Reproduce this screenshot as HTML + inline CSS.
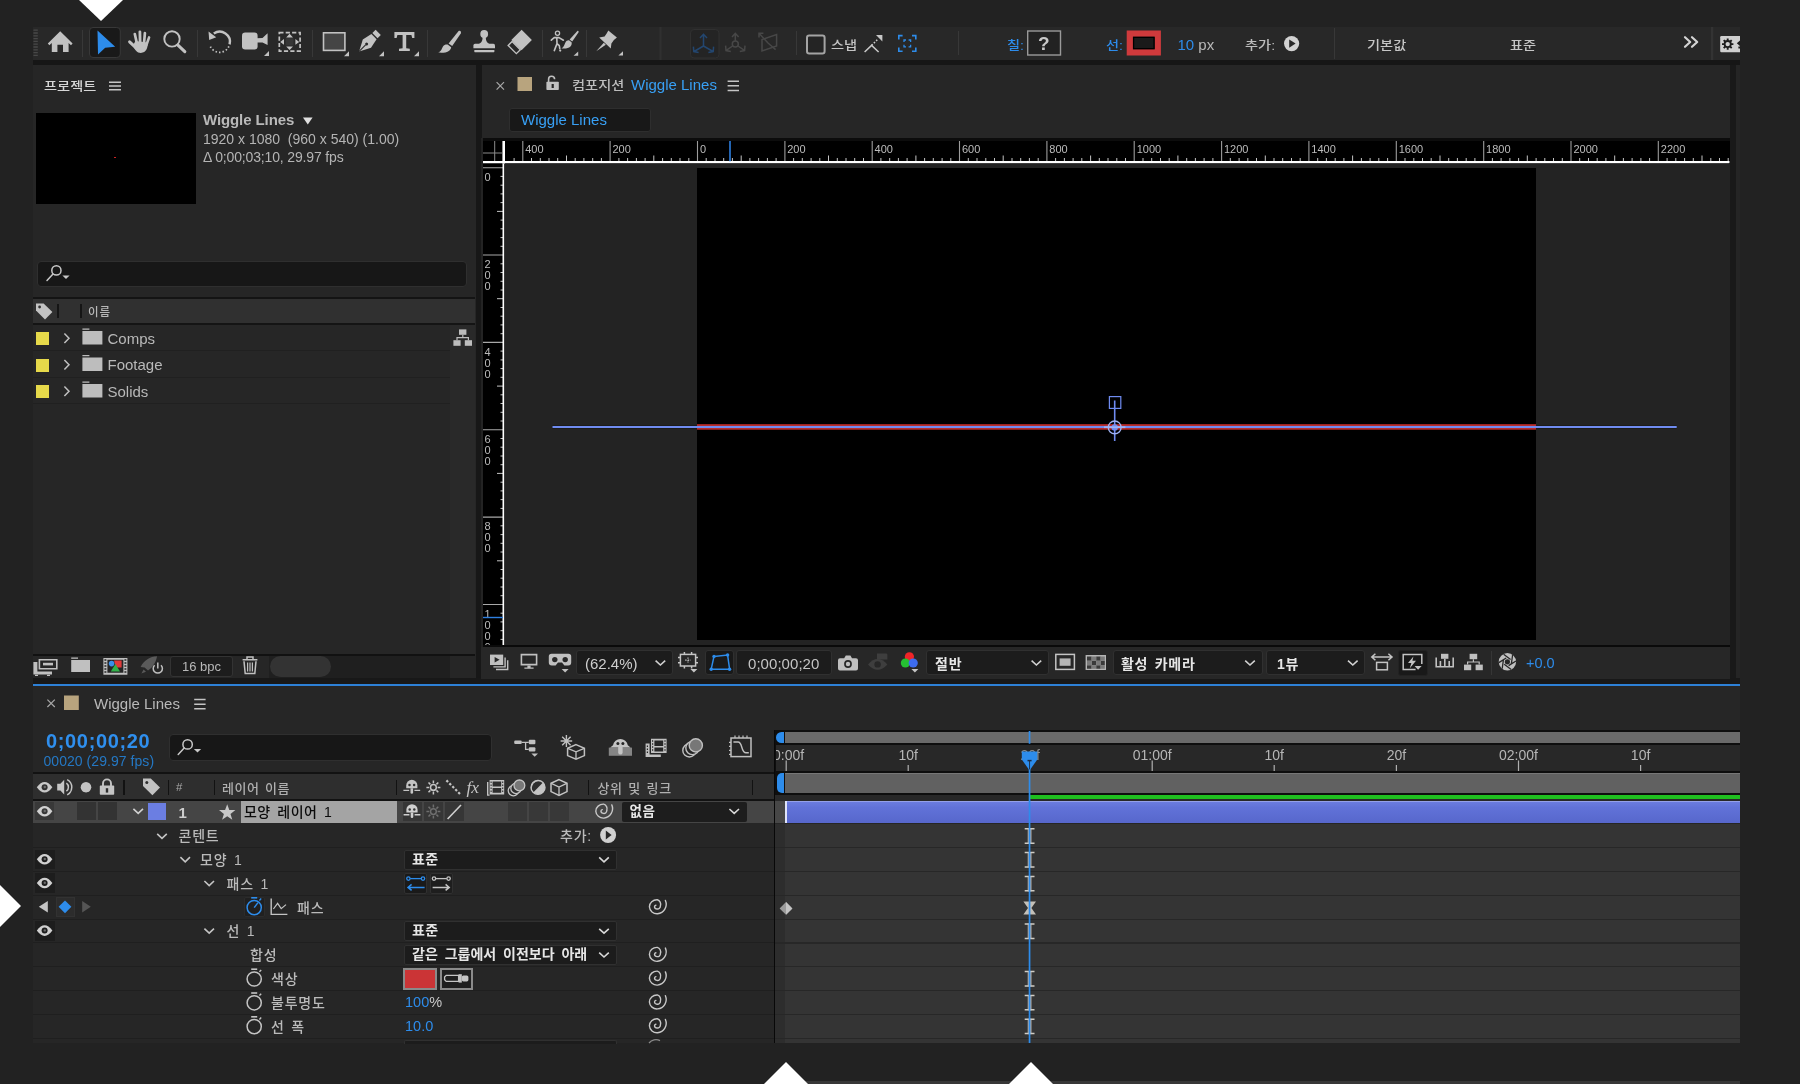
<!DOCTYPE html>
<html lang="ko">
<head>
<meta charset="utf-8">
<title>Wiggle Lines</title>
<style>
*{box-sizing:border-box;margin:0;padding:0}
html,body{width:1800px;height:1084px;overflow:hidden;background:#222222}
body{position:relative;font-family:"Liberation Sans","Noto Sans CJK KR",sans-serif;color:#bdbdbd;font-size:14px;line-height:1;font-weight:500}
#wrap{position:absolute;left:0;top:0;width:1800px;height:1084px;will-change:transform}
.a{position:absolute}
.t{position:absolute;white-space:nowrap;line-height:1;z-index:2}
.k{font-size:12.2px;transform:scaleX(1.165);transform-origin:0 0}
.bl{color:#2d8ceb}
.w{color:#e6e6e6;font-weight:bold}
.dd{position:absolute;background:#1c1c1c;border:1px solid #303030;border-radius:3px}
svg{position:absolute;left:0;top:0;overflow:visible}
#ico{width:1800px;height:1084px;pointer-events:none;z-index:1}
.row{position:absolute;left:33px;width:741px;height:1px;background:#1f1f1f}
.trow{position:absolute;left:775.4px;width:964.6px;height:1.4px;background:#272727}
</style>
</head>
<body>
<div id="wrap">
<!-- ===== base panels ===== -->
<div class="a" style="left:33px;top:27px;width:1707px;height:1016px;background:#262626"></div>
<!-- toolbar -->
<div class="a" style="left:33px;top:27px;width:1707px;height:33px;background:#282828"></div>
<div class="a" style="left:33px;top:60px;width:1707px;height:5px;background:#161616"></div>
<!-- divider project / comp -->
<div class="a" style="left:476px;top:65px;width:5.5px;height:620px;background:#171717"></div>
<!-- comp right bar -->
<div class="a" style="left:1730px;top:65px;width:6px;height:620px;background:#191919"></div>
<div class="a" style="left:1736px;top:65px;width:4px;height:614px;background:#252525"></div>
<!-- strip between upper panels and timeline -->
<div class="a" style="left:33px;top:678px;width:1707px;height:6px;background:#181818"></div>
<div class="a" style="left:33px;top:684px;width:1707px;height:2px;background:#2d80d6"></div>
<div class="a" style="left:785px;top:1080.7px;width:955px;height:3.3px;background:#373737"></div>
<!-- white triangles (pointer marks) -->
<div class="a" style="left:79px;top:0;width:0;height:0;border-left:22px solid transparent;border-right:22px solid transparent;border-top:21.5px solid #fff"></div>
<div class="a" style="left:0;top:885px;width:0;height:0;border-top:21.5px solid transparent;border-bottom:21.5px solid transparent;border-left:21.5px solid #fff"></div>
<div class="a" style="left:763.5px;top:1062px;width:0;height:0;border-left:22px solid transparent;border-right:22px solid transparent;border-bottom:22px solid #fff"></div>
<div class="a" style="left:1009px;top:1062px;width:0;height:0;border-left:22px solid transparent;border-right:22px solid transparent;border-bottom:22px solid #fff"></div>
<!-- ===== project panel ===== -->
<div class="t k" style="left:43.5px;top:80.6px;color:#d6d6d6">프로젝트</div>
<div class="a" style="left:36px;top:113px;width:160px;height:91px;background:#000"></div>
<div class="a" style="left:114px;top:156.5px;width:2px;height:1px;background:#c22"></div>
<div class="t" style="left:203px;top:112px;font-size:15px;font-weight:bold;color:#b9b9b9;letter-spacing:-0.1px">Wiggle Lines</div>
<div class="t" style="left:203px;top:132px;font-size:14px;color:#b4b4b4">1920 x 1080&nbsp; (960 x 540) (1.00)</div>
<div class="t" style="left:203px;top:150px;font-size:14px;color:#b4b4b4;letter-spacing:-0.15px">&Delta; 0;00;03;10, 29.97 fps</div>
<!-- search -->
<div class="a" style="left:37px;top:261px;width:430px;height:26px;background:#171717;border:1px solid #2f2f2f;border-radius:4px"></div>
<!-- column header -->
<div class="a" style="left:33px;top:297px;width:442px;height:28px;background:#141414"></div>
<div class="a" style="left:33px;top:299px;width:442px;height:24px;background:#303030"></div>
<div class="a" style="left:57px;top:304px;width:2px;height:14px;background:#151515"></div>
<div class="a" style="left:79.5px;top:304px;width:2px;height:14px;background:#151515"></div>
<div class="t" style="left:88px;top:306.5px;font-size:11.5px;color:#b8b8b8;letter-spacing:0.8px">이름</div>
<!-- rows -->
<div class="a" style="left:450px;top:325px;width:25px;height:329px;background:#292929"></div>
<div class="a" style="left:33px;top:350px;width:417px;height:1px;background:#202020"></div>
<div class="a" style="left:33px;top:377px;width:417px;height:1px;background:#202020"></div>
<div class="a" style="left:33px;top:403px;width:417px;height:1px;background:#202020"></div>
<div class="a" style="left:36px;top:332px;width:13px;height:13px;background:#e6d94a"></div>
<div class="a" style="left:36px;top:358.5px;width:13px;height:13px;background:#e6d94a"></div>
<div class="a" style="left:36px;top:385px;width:13px;height:13px;background:#e6d94a"></div>
<div class="t" style="left:107.5px;top:330.5px;font-size:15px;color:#b9b9b9">Comps</div>
<div class="t" style="left:107.5px;top:357px;font-size:15px;color:#b9b9b9">Footage</div>
<div class="t" style="left:107.5px;top:383.5px;font-size:15px;color:#b9b9b9">Solids</div>
<!-- footer -->
<div class="a" style="left:33px;top:654px;width:442px;height:1.5px;background:#111"></div>
<div class="a" style="left:269px;top:655.5px;width:181px;height:22px;background:#1f1f1f"></div>
<div class="a" style="left:270px;top:655.5px;width:61px;height:21px;background:#333;border-radius:11px"></div>
<div class="a" style="left:170px;top:656px;width:63px;height:20.5px;background:#1d1d1d;border:1px solid #333;border-radius:3px"></div>
<div class="t" style="left:182px;top:660px;font-size:13px;color:#b8b8b8">16 bpc</div>
<!-- ===== toolbar text ===== -->
<div class="t" style="left:831px;top:39.5px;font-size:12.2px;transform:scaleX(1.165);transform-origin:0 0;color:#c4c4c4">스냅</div>
<div class="t bl" style="left:1006.5px;top:39.5px;font-size:12.2px;transform:scaleX(1.165);transform-origin:0 0">칠:</div>
<div class="t" style="left:1038px;top:33.5px;font-size:19px;font-weight:bold;color:#c8c8c8">?</div>
<div class="t bl" style="left:1106px;top:39.5px;font-size:12.2px;transform:scaleX(1.165);transform-origin:0 0">선:</div>
<div class="t" style="left:1177.5px;top:36.5px;font-size:15px;color:#b8b8b8"><span class="bl">10</span> px</div>
<div class="t" style="left:1245px;top:39.5px;font-size:12.2px;transform:scaleX(1.165);transform-origin:0 0;color:#bdbdbd">추가:</div>
<div class="t" style="left:1366.5px;top:39.5px;font-size:12.2px;transform:scaleX(1.165);transform-origin:0 0;color:#c6c6c6">기본값</div>
<div class="t" style="left:1510px;top:39.5px;font-size:12.2px;transform:scaleX(1.165);transform-origin:0 0;color:#c6c6c6">표준</div>
<!-- ===== composition panel ===== -->
<div class="t k" style="left:572.3px;top:80.3px;color:#bdbdbd">컴포지션</div>
<div class="t" style="left:631px;top:77px;font-size:15px;color:#38a0f5">Wiggle Lines</div>
<div class="a" style="left:509px;top:108px;width:142px;height:24px;background:#181818;border:1px solid #2e2e2e;border-radius:3px"></div>
<div class="t" style="left:521px;top:112px;font-size:15px;color:#38a0f5">Wiggle Lines</div>
<!-- viewer -->
<div class="a" style="left:481px;top:138px;width:1249px;height:509px;background:#232323"></div>
<div class="a" style="left:483px;top:138px;width:1247px;height:2.5px;background:#0c0c0c"></div>
<div class="a" style="left:483px;top:140.5px;width:1246.5px;height:23px;background:#000"></div>
<div class="a" style="left:483px;top:163px;width:20px;height:482.5px;background:#000"></div>
<div class="a" style="left:483px;top:645px;width:1246.5px;height:2px;background:#0a0a0a"></div>
<!-- canvas -->
<div class="a" style="left:697px;top:168px;width:839px;height:471.5px;background:#000"></div>
<!-- footer -->
<div class="a" style="left:481px;top:647px;width:1249px;height:32px;background:#272727"></div>
<div class="dd" style="left:576px;top:650px;width:96.5px;height:25px"></div>
<div class="t" style="left:585px;top:655.5px;font-size:15px;color:#cfcfcf">(62.4%)</div>
<div class="dd" style="left:705px;top:650px;width:29px;height:25px;background:#191919"></div>
<div class="dd" style="left:735.5px;top:650px;width:96.5px;height:25px"></div>
<div class="t" style="left:748px;top:656px;font-size:15px;color:#c4c4c4;letter-spacing:0.05px">0;00;00;20</div>
<div class="dd" style="left:926px;top:650px;width:123px;height:25px"></div>
<div class="t w" style="left:935px;top:656.5px;font-size:14px;letter-spacing:0.8px">절반</div>
<div class="dd" style="left:1112.5px;top:650px;width:150px;height:25px"></div>
<div class="t w" style="left:1121px;top:656.5px;font-size:14px;word-spacing:2px;letter-spacing:0.7px">활성 카메라</div>
<div class="dd" style="left:1266px;top:650px;width:99px;height:25px"></div>
<div class="t w" style="left:1277px;top:656.5px;font-size:14px;letter-spacing:0.6px">1뷰</div>
<div class="dd" style="left:1397.5px;top:650px;width:30px;height:25.5px;background:#191919;border-color:#222"></div>
<div class="a" style="left:1491px;top:651px;width:1px;height:24px;background:#363636"></div>
<div class="t bl" style="left:1526px;top:656px;font-size:14.5px">+0.0</div>
<!-- ===== timeline panel ===== -->
<div class="t" style="left:94px;top:695.5px;font-size:15px;color:#b9b9b9">Wiggle Lines</div>
<div class="t bl" style="left:46px;top:730.5px;font-size:20px;font-weight:bold;letter-spacing:0.65px;color:#2f8fee">0;00;00;20</div>
<div class="t" style="left:43.5px;top:754px;font-size:14px;color:#2478c4;letter-spacing:0.05px">00020 (29.97 fps)</div>
<div class="a" style="left:168.5px;top:734px;width:323.5px;height:26.5px;background:#171717;border:1px solid #2f2f2f;border-radius:4px"></div>
<!-- column header -->
<div class="a" style="left:33px;top:772px;width:741.5px;height:29px;background:#121212"></div>
<div class="a" style="left:33px;top:774px;width:741.5px;height:25px;background:#2e2e2e"></div>
<div class="a" style="left:123px;top:780px;width:1.6px;height:14.5px;background:#121212"></div>
<div class="a" style="left:167.5px;top:780px;width:1.6px;height:14.5px;background:#121212"></div>
<div class="a" style="left:213.5px;top:780px;width:1.6px;height:14.5px;background:#121212"></div>
<div class="a" style="left:395.5px;top:780px;width:1.6px;height:14.5px;background:#121212"></div>
<div class="a" style="left:587.5px;top:780px;width:1.6px;height:14.5px;background:#121212"></div>
<div class="a" style="left:751.5px;top:780px;width:1.6px;height:14.5px;background:#121212"></div>
<div class="t" style="left:176px;top:781.5px;font-size:11.5px;color:#a8a8a8">#</div>
<div class="t" style="left:222px;top:781.5px;font-size:13px;color:#b0b0b0;word-spacing:1px;letter-spacing:0.6px">레이어 이름</div>
<div class="t" style="left:597.5px;top:781.5px;font-size:13px;color:#b0b0b0;word-spacing:1.5px;letter-spacing:0.6px">상위 및 링크</div>
<!-- layer row -->
<div class="a" style="left:33px;top:801px;width:741.5px;height:22px;background:#454545"></div>
<div class="a" style="left:35px;top:802px;width:18.5px;height:18px;background:#383838"></div>
<div class="a" style="left:77px;top:802px;width:18.5px;height:18px;background:#333"></div>
<div class="a" style="left:98px;top:802px;width:18.5px;height:18px;background:#333"></div>
<div class="a" style="left:148px;top:803px;width:17.5px;height:17px;background:#6b7ee2"></div>
<div class="t" style="left:178.5px;top:804.5px;font-size:15px;font-weight:bold;color:#cdcdcd">1</div>
<div class="a" style="left:240.5px;top:801px;width:156px;height:22px;background:#a4a4a4"></div>
<div class="t" style="left:244px;top:805px;font-size:14px;color:#0a0a0a;word-spacing:2.5px;letter-spacing:0.4px">모양 레이어 1</div>
<div class="a" style="left:403px;top:802px;width:18.5px;height:19px;background:#363636"></div>
<div class="a" style="left:424px;top:802px;width:18.5px;height:19px;background:#363636"></div>
<div class="a" style="left:445px;top:802px;width:18.5px;height:19px;background:#363636"></div>
<div class="a" style="left:508px;top:802px;width:18.5px;height:19px;background:#383838"></div>
<div class="a" style="left:529px;top:802px;width:18.5px;height:19px;background:#383838"></div>
<div class="a" style="left:550px;top:802px;width:18.5px;height:19px;background:#383838"></div>
<div class="a" style="left:621.5px;top:801.5px;width:125.5px;height:20px;background:#1d1d1d;border-radius:2px"></div>
<div class="t w" style="left:629.5px;top:804.5px;font-size:13.5px;letter-spacing:0.5px">없음</div>
<!-- property rows (separators) -->
<div class="row" style="top:847px"></div>
<div class="row" style="top:871px"></div>
<div class="row" style="top:894.7px"></div>
<div class="row" style="top:918.5px"></div>
<div class="row" style="top:942.3px"></div>
<div class="row" style="top:966px"></div>
<div class="row" style="top:990px"></div>
<div class="row" style="top:1013.7px"></div>
<div class="row" style="top:1037.5px"></div>
<!-- eye cells -->
<div class="a" style="left:35px;top:849.5px;width:19.5px;height:19.5px;background:#1d1d1d"></div>
<div class="a" style="left:35px;top:873.3px;width:19.5px;height:19.5px;background:#1d1d1d"></div>
<div class="a" style="left:35px;top:921px;width:19.5px;height:19.5px;background:#1d1d1d"></div>
<div class="a" style="left:56px;top:897px;width:19px;height:19.5px;background:#2c2c2c;border:1px solid #323232"></div>
<div class="a" style="left:243.5px;top:896.5px;width:21.5px;height:20.5px;background:#202020;border:1px solid #2c2c2c;border-radius:2px"></div>
<!-- labels -->
<div class="t" style="left:178.5px;top:829.0px;font-size:14px;color:#bababa;letter-spacing:0.8px">콘텐트</div>
<div class="t" style="left:560px;top:828.5px;font-size:14px;color:#bababa;letter-spacing:0.8px">추가:</div>
<div class="t" style="left:200px;top:853.0px;font-size:14px;color:#bababa;letter-spacing:0.8px;word-spacing:2px">모양 1</div>
<div class="t" style="left:226.5px;top:876.8px;font-size:14px;color:#bababa;letter-spacing:0.8px;word-spacing:2px">패스 1</div>
<div class="t" style="left:297px;top:900.6px;font-size:14px;color:#bababa;letter-spacing:0.8px">패스</div>
<div class="t" style="left:226.5px;top:924.4px;font-size:14px;color:#bababa;letter-spacing:0.8px;word-spacing:2px">선 1</div>
<div class="t" style="left:250px;top:948.2px;font-size:14px;color:#bababa;letter-spacing:0.8px">합성</div>
<div class="t" style="left:271px;top:972.0px;font-size:14px;color:#bababa;letter-spacing:0.8px">색상</div>
<div class="t" style="left:271px;top:995.8px;font-size:14px;color:#bababa;letter-spacing:0.8px">불투명도</div>
<div class="t" style="left:271px;top:1019.6px;font-size:14px;color:#bababa;letter-spacing:0.8px;word-spacing:2px">선 폭</div>
<!-- dropdowns -->
<div class="dd" style="left:403.5px;top:849.5px;width:213px;height:20px;border-radius:2px"></div>
<div class="t w" style="left:412px;top:851.7px;font-size:14px;letter-spacing:0.3px">표준</div>
<div class="dd" style="left:403.5px;top:921px;width:213px;height:20px;border-radius:2px"></div>
<div class="t w" style="left:412px;top:923.2px;font-size:14px;letter-spacing:0.3px">표준</div>
<div class="dd" style="left:403.5px;top:944.8px;width:213px;height:20px;border-radius:2px"></div>
<div class="t w" style="left:412px;top:947px;font-size:14px;word-spacing:3px">같은 그룹에서 이전보다 아래</div>
<div class="dd" style="left:403.5px;top:1040px;width:213px;height:4px;border-radius:2px 2px 0 0;border-bottom:0"></div>
<div class="dd" style="left:403.5px;top:873px;width:23.5px;height:20.5px;background:#1a1a1a;border-color:#303030;border-radius:2px"></div>
<div class="dd" style="left:429.5px;top:873px;width:23.5px;height:20.5px;background:#1e1e1e;border-color:#303030;border-radius:2px"></div>
<!-- colour swatch / eyedropper -->
<div class="a" style="left:403px;top:967.5px;width:33.5px;height:22px;background:#cb3436;border:2px solid #8a8a8a"></div>
<div class="a" style="left:439.5px;top:967.5px;width:33.5px;height:22px;background:#1f1f1f;border:2px solid #8a8a8a"></div>
<div class="t" style="left:405px;top:995.3px;font-size:14.5px;color:#c8c8c8"><span class="bl">100</span>%</div>
<div class="t bl" style="left:405px;top:1019px;font-size:14.5px">10.0</div>
<!-- ===== time graph ===== -->
<div class="a" style="left:773.6px;top:730px;width:966.4px;height:71px;background:#0e0e0e"></div>
<div class="a" style="left:773.6px;top:730px;width:1.8px;height:313px;background:#080808"></div>
<div class="a" style="left:785px;top:732px;width:955px;height:10.7px;background:#6a6a6a"></div>
<div class="a" style="left:775.5px;top:732px;width:8.5px;height:10.7px;background:#2d8ceb;border-radius:6px 0 0 6px"></div>
<div class="a" style="left:776px;top:744.5px;width:964px;height:26.5px;background:#282828"></div>
<div class="a" style="left:785px;top:773.3px;width:955px;height:20px;background:#616161"></div>
<div class="a wa-hi" style="left:785px;top:773.3px;width:955px;height:1px;background:#777"></div>
<div class="a" style="left:776.5px;top:773.3px;width:7.5px;height:20px;background:#2d8ceb;border-radius:5px 0 0 5px"></div>
<div class="a" style="left:775.4px;top:795px;width:964.6px;height:6px;background:#282828"></div>
<div class="a" style="left:1030px;top:795.3px;width:710px;height:3.7px;background:#1fbf1f"></div>
<!-- layer bar -->
<div class="a" style="left:775.4px;top:801px;width:9.8px;height:22px;background:#474747"></div>
<div class="a" style="left:785.2px;top:801px;width:954.8px;height:21.7px;background:linear-gradient(#a9b3ee 0,#6a7bde 1.5px,#6172d8 30%,#5767cc 100%)"></div>
<div class="a" style="left:785.2px;top:801px;width:1.4px;height:21.7px;background:#dfe3fa"></div>
<!-- rows -->
<div class="a" style="left:776px;top:822.7px;width:964px;height:220.3px;background:#343434"></div>
<div class="a" style="left:775.4px;top:822.7px;width:9.8px;height:220.3px;background:#2d2d2d"></div>
<div class="trow" style="top:822.7px;background:#262626"></div>
<div class="trow" style="top:847px"></div>
<div class="trow" style="top:871px"></div>
<div class="trow" style="top:894.7px"></div>
<div class="trow" style="top:918.5px"></div>
<div class="trow" style="top:942.3px"></div>
<div class="trow" style="top:966px"></div>
<div class="trow" style="top:990px"></div>
<div class="trow" style="top:1013.7px"></div>
<div class="trow" style="top:1037.5px"></div>
<!-- time labels -->
<div class="a" style="left:776px;top:744.5px;width:40px;height:26px;overflow:hidden"><div class="t" style="left:-10.8px;top:3px;font-size:14px;color:#b6b6b6">00:00f</div></div>
<div class="t" style="left:908.2px;top:747.5px;font-size:14px;color:#b6b6b6;transform:translateX(-50%)">10f</div>
<div class="t" style="left:1030.2px;top:747.5px;font-size:14px;color:#8e8e8e;z-index:0;transform:translateX(-50%)">20f</div>
<div class="t" style="left:1152.2px;top:747.5px;font-size:14px;color:#b6b6b6;transform:translateX(-50%)">01:00f</div>
<div class="t" style="left:1274.2px;top:747.5px;font-size:14px;color:#b6b6b6;transform:translateX(-50%)">10f</div>
<div class="t" style="left:1396.4px;top:747.5px;font-size:14px;color:#b6b6b6;transform:translateX(-50%)">20f</div>
<div class="t" style="left:1518.5px;top:747.5px;font-size:14px;color:#b6b6b6;transform:translateX(-50%)">02:00f</div>
<div class="t" style="left:1640.6px;top:747.5px;font-size:14px;color:#b6b6b6;transform:translateX(-50%)">10f</div>
<svg id="ico" viewBox="0 0 1800 1084">
<!-- ===== toolbar ===== -->
<g fill="#c2c2c2" stroke="none">
<!-- grip -->
<path d="M33.4 30.2h4.4M33.4 33h4.4M33.4 35.8h4.4M33.4 38.6h4.4M33.4 41.4h4.4M33.4 44.2h4.4M33.4 47h4.4M33.4 49.8h4.4M33.4 52.6h4.4M33.4 55.4h4.4" stroke="#484848" stroke-width="1.3" fill="none"/>
<!-- separators -->
<path d="M82.5 30v27M197.5 30v27M312.5 30v27M427.5 30v27M542.5 30v27M586.5 30v27M796.5 31v24M958.5 31v24M1334.5 28v31" stroke="#383838" stroke-width="1" fill="none"/>
<path d="M1712.1 27v33" stroke="#333" stroke-width="2.2" fill="none"/>
<path d="M660.5 27v33" stroke="#303030" stroke-width="2" fill="none"/>
<!-- home -->
<path d="M60.2 31.2L72.6 43.6L71 45.2L68.6 43V52H63V44.7H57.4V52H51.8V43L49.4 45.2L47.8 43.6Z"/>
<!-- selection tool -->
<rect x="89.5" y="27.5" width="30.8" height="30" rx="3.5" fill="#191919" stroke="#383838" stroke-width="1"/>
<path d="M97.5 30.4L115.2 46.8L105.2 47.8L98 54.6Z" fill="#2d8ceb"/>
<!-- hand -->
<g stroke="#c2c2c2" stroke-linecap="round" fill="none">
<path d="M134.8 34L136.8 43" stroke-width="2.7"/>
<path d="M139.9 31.8L140.1 42" stroke-width="2.8"/>
<path d="M144.9 33.2L144.1 42.5" stroke-width="2.7"/>
<path d="M149.1 37.4L146.4 45" stroke-width="2.6"/>
<path d="M129.6 41.8L135.8 47.6" stroke-width="3"/>
</g>
<path d="M135.4 41L147.6 42.6C148 48.4 146 52.9 140.8 52.9C137 52.9 134.6 49.6 133 45.4Z"/>
<!-- zoom -->
<circle cx="172" cy="38.9" r="7.7" fill="none" stroke="#c2c2c2" stroke-width="1.9"/>
<path d="M177.9 45.1L184.8 51.6" stroke="#c2c2c2" stroke-width="3.1" stroke-linecap="round" fill="none"/>
<!-- rotate -->
<path d="M213.8 33.6A10.2 10.2 0 0 1 229.6 44.4" fill="none" stroke="#c2c2c2" stroke-width="2.4"/>
<path d="M228.9 46.3A10.2 10.2 0 0 1 210 45.6" fill="none" stroke="#c2c2c2" stroke-width="1.7" stroke-dasharray="1.5 2.05"/>
<path d="M208.5 31.6L216.2 37.2L209.2 39.9Z"/>
<!-- camera -->
<rect x="242" y="32.6" width="15.6" height="16.8" rx="3.2"/>
<path d="M256.5 38.3L262.5 38L267.6 33.2V45L262.5 42.4L256.5 42.6Z"/>
<path d="M269 51v5h-5z"/>
<!-- pan behind -->
<rect x="279.3" y="32.7" width="20.8" height="18.4" fill="none" stroke="#c2c2c2" stroke-width="1.7" stroke-dasharray="4.2 2.2"/>
<rect x="285.6" y="38.2" width="8" height="7.4" fill="#363636"/>
<path d="M289.6 33.8L293 37.4H286.2ZM289.6 50L293 46.4H286.2ZM280.2 41.9L284 39V44.8ZM299.2 41.9L295.4 39V44.8Z"/>
<!-- rect tool -->
<rect x="323.5" y="32.8" width="21.4" height="17.6" fill="#454545" stroke="#c2c2c2" stroke-width="1.6"/>
<path d="M349 51.2v5h-5z"/>
<!-- pen -->
<g transform="translate(368.6 42) rotate(45)">
<rect x="-3.7" y="-13.6" width="7.4" height="4.6"/>
<path d="M-3.7 -7.6H3.7L5.8 2.4L0 13.4L-5.8 2.4Z"/>
<path d="M0 13.4V4.2" stroke="#282828" stroke-width="1" fill="none"/>
<circle cx="0" cy="2.8" r="1.5" fill="#282828"/>
</g>
<path d="M384 51.2v5h-5z"/>
<!-- type -->
<path d="M394.4 32H414.4V38H412.2L411.4 35H406.2V48.2L409.8 48.8V51H399V48.8L402.6 48.2V35H397.4L396.6 38H394.4Z"/>
<path d="M419 51.2v5h-5z"/>
<!-- brush -->
<path d="M458.4 31.2C460 30.2 461.6 31.6 460.8 33.4L452.2 46L448.6 43.6Z"/>
<path d="M447.6 44.6L451.2 47.2C450.6 51 446.6 53.4 438.2 52.6C441.6 51 441.8 48.2 443 46.4C444.2 44.8 446 44.2 447.6 44.6Z"/>
<!-- stamp -->
<circle cx="484.2" cy="33.9" r="3.9"/>
<path d="M482.5 36.6C482.8 40 482 42.6 478.6 44.2H489.8C486.4 42.6 485.6 40 485.9 36.6Z"/>
<path d="M475 43.8H493.4Q495 43.8 495 45.4V48.2H473.4V45.4Q473.4 43.8 475 43.8Z"/>
<rect x="474.3" y="49.9" width="20.1" height="2.3" rx="0.6"/>
<!-- eraser -->
<g transform="translate(521.6 39.9) rotate(45)">
<rect x="-7.25" y="-7.25" width="14.5" height="14.5"/>
<rect x="-5.6" y="7.8" width="11.6" height="5.6" fill="none" stroke="#c2c2c2" stroke-width="1.4"/>
</g>
<!-- roto brush -->
<circle cx="557.5" cy="33.3" r="2.1" fill="none" stroke="#c2c2c2" stroke-width="1.3"/>
<path d="M551.3 40.2L554.2 37.6H559L563.4 40.2M556.8 37.8L557 43.6L554.3 50.6M557 43.6L559.3 45.6L559.8 48.6" fill="none" stroke="#c2c2c2" stroke-width="1.6" stroke-linecap="round" stroke-linejoin="round"/>
<circle cx="560.2" cy="50.6" r="1.1"/>
<path d="M577.6 30.8C578.6 30.6 578.8 31.6 578.4 32.6L572.2 41.4L569.6 39.4Z"/>
<path d="M569 40.2L571.6 42.2C572.4 46 569 49.4 561.4 48.4C564.2 47 564.2 44.6 565.4 42.4C566.2 40.8 567.6 40 569 40.2Z"/>
<path d="M578.2 51.4v4.4h-4.6z"/>
<!-- pin -->
<path d="M608.3 30.4L616.9 37.6L613.9 39.9L611.4 43.4L610.8 48.5L599.2 37.4L604.6 36.4L606.8 33.2Z"/>
<path d="M603.8 42.8L605.8 44.8L596.2 51.2Z"/>
<path d="M623 51.2v4.4h-4.6z"/>
</g>
<!-- axis modes -->
<rect x="690.5" y="29.5" width="28.5" height="28.5" rx="3.5" fill="#242424" stroke="#303030" stroke-width="1"/>
<g fill="none" stroke="#23466f" stroke-width="1.5">
<path d="M703.5 46V34.5M700 38L703.5 34.3L707 38M703.5 46L694 51.5M693.4 46.6L693.8 51.6L698.6 52.6M703.5 46L713 51.5M713.6 46.6L713.2 51.6L708.4 52.6"/>
</g>
<g fill="none" stroke="#474747" stroke-width="1.5">
<path d="M735.3 41V33.4M732 37L735.3 33.3L738.6 37M732.6 46L726.2 50.4M725.6 45.6L726 50.6L730.8 51.6M738 46L744.4 50.4M745 45.6L744.6 50.6L739.8 51.6"/>
<circle cx="735.3" cy="44" r="3"/>
<path d="M762 51V39.6L776.6 34.6V46Z"/>
<path d="M768 43L759.2 33.4M759 37.6V33.2H763.4M768 43L775.6 49.6"/>
</g>
<!-- snap checkbox -->
<rect x="807" y="35.6" width="17.6" height="17.8" rx="2.2" fill="#242424" stroke="#a4a4a4" stroke-width="2"/>
<!-- snap icons -->
<g fill="none" stroke="#c8c8c8" stroke-width="1.5">
<path d="M864.6 52L871.6 45.4L878.6 52"/>
<path d="M871.6 45.4L878 39" stroke-dasharray="1.6 1.6"/>
</g>
<path d="M876 35H882.4V41.4Z" fill="#c8c8c8"/>
<g fill="none" stroke="#2d8ceb" stroke-width="1.6">
<path d="M898.8 39.4V35.6H902.6M912 35.6H915.8V39.4M915.8 47.4V51.2H912M902.6 51.2H898.8V47.4"/>
<path d="M904 42V40H906M908.6 40H910.6V42M910.6 44.8V46.8H908.6M906 46.8H904V44.8" stroke-width="1.3"/>
</g>
<!-- fill / stroke -->
<rect x="1027.7" y="31" width="32.8" height="24" fill="#222" stroke="#9a9a9a" stroke-width="1.4"/>
<rect x="1129.8" y="33.6" width="28" height="18.8" fill="#111" stroke="#cf3a3c" stroke-width="6.2"/>
<rect x="1133.6" y="37.4" width="20.4" height="11.2" fill="#1a1a1a" stroke="#000" stroke-width="1.2"/>
<!-- add arrow -->
<circle cx="1291.6" cy="43.6" r="7.6" fill="#d2d2d2"/>
<path d="M1289.2 39.4L1295.6 43.6L1289.2 47.8Z" fill="#282828"/>
<!-- chevrons >> -->
<path d="M1685 37.2L1690.2 42L1685 46.8M1692 37.2L1697.2 42L1692 46.8" fill="none" stroke="#d4d4d4" stroke-width="2.2" stroke-linecap="round" stroke-linejoin="round"/>
<!-- sync settings gear -->
<path d="M1721.4 36H1740V52.2H1721.4Q1720.2 52.2 1720.2 51V37.2Q1720.2 36 1721.4 36Z" fill="#d0d0d0"/>
<path d="M1730.7 44.1L1733.4 44.1M1729.8 46.2L1731.7 48.1M1727.7 47.1L1727.7 49.8M1725.6 46.2L1723.7 48.1M1724.7 44.1L1722.0 44.1M1725.6 42.0L1723.7 40.1M1727.7 41.1L1727.7 38.4M1729.8 42.0L1731.7 40.1" stroke="#1c1c1c" stroke-width="1.9" fill="none"/>
<circle cx="1727.7" cy="44.1" r="4" fill="#1c1c1c"/>
<circle cx="1727.7" cy="44.1" r="2.2" fill="#d0d0d0"/>
<path d="M1740 40.4L1736.8 43.2L1740 46ZM1738.4 46.4H1740V48.6H1738.4Z" fill="#1c1c1c"/>
<!-- ===== project icons ===== -->
<path d="M109 82.2h12M109 86h12M109 89.8h12" stroke="#c4c4c4" stroke-width="1.5" fill="none"/>
<path d="M303 117.6H312.6L307.8 124.4Z" fill="#e0e0e0"/>
<!-- search icon -->
<g fill="none" stroke="#c8c8c8" stroke-width="1.5">
<circle cx="56.4" cy="270.4" r="4.6"/>
<path d="M53 274L47 280.4" stroke-linecap="round"/>
</g>
<path d="M62.4 275.6H69.6L66 279Z" fill="#c8c8c8"/>
<!-- tag -->
<path d="M36 303.4H43.6L52.4 312L45 319.4L36 310.6Z" fill="#c2c2c2"/>
<circle cx="39.6" cy="307" r="1.4" fill="#303030"/>
<!-- chevrons + folders -->
<g fill="none" stroke="#c0c0c0" stroke-width="1.5">
<path d="M64.4 333.4L69 338.2L64.4 343"/>
<path d="M64.4 359.9L69 364.7L64.4 369.5"/>
<path d="M64.4 386.4L69 391.2L64.4 396"/>
</g>
<g fill="#bdbdbd">
<path d="M82.4 328.6H89.4V329.8H82.4ZM82.4 331H102.4V344.6H82.4Z"/>
<path d="M82.4 355.1H89.4V356.3H82.4ZM82.4 357.5H102.4V371.1H82.4Z"/>
<path d="M82.4 381.6H89.4V382.8H82.4ZM82.4 384H102.4V397.6H82.4Z"/>
</g>
<!-- flowchart button -->
<g fill="#bdbdbd">
<rect x="459" y="329.4" width="7.4" height="5.4"/>
<rect x="453.4" y="340.2" width="7.2" height="5.6"/>
<rect x="464.8" y="340.2" width="7.2" height="5.6"/>
<path d="M462.2 334.8H463.4V337H469V340.2H467.8V338.2H457.6V340.2H456.4V337H462.2Z"/>
</g>
<!-- footer: interpret footage -->
<g fill="#c0c0c0">
<path d="M38.6 659H57.6V669.6H38.6ZM40.2 660.6V668H56V660.6Z" fill-rule="evenodd"/>
<rect x="43" y="662.8" width="10" height="2.6"/>
<path d="M33.4 662H37.4V671.4H52V674.6H33.4Z"/>
<path d="M35 675.4h3M47 675.4h3" stroke="#c0c0c0" stroke-width="1.2"/>
<!-- folder -->
<path d="M71.2 657.6H78V658.8H71.2ZM71.2 660H90V672H71.2Z"/>
<!-- new comp -->
<path d="M103.4 658H127.4V674.8H103.4ZM107.4 659.8V672.8H123.4V659.8Z" fill-rule="evenodd"/>
</g>
<path d="M104.4 660h2M104.4 663h2M104.4 666h2M104.4 669h2M104.4 672h2M124.4 660h2M124.4 663h2M124.4 666h2M124.4 669h2M124.4 672h2" stroke="#262626" stroke-width="1.4"/>
<circle cx="111.6" cy="663.6" r="2.8" fill="#3b8fe8"/>
<path d="M114 660.6H121.6V667.4H116Z" fill="#e03a3a"/>
<path d="M115.4 664L120 671.4H110.8Z" fill="#32b24a"/>
<!-- rocket (disabled) -->
<path d="M140.6 667C144 660 150 656.6 157 656.2C156.4 661 153.6 666.6 148 670.6L144.6 667.4Z" fill="#5a5a5a"/>
<path d="M143.6 669.4L146 671.8L141.4 673.6Z" fill="#5a5a5a"/>
<g fill="none" stroke="#c0c0c0" stroke-width="1.5">
<path d="M154.6 665.2A4.6 4.6 0 1 0 161 665.2"/>
<path d="M157.8 662.6V668.4"/>
</g>
<!-- trash -->
<g fill="none" stroke="#c0c0c0" stroke-width="1.5">
<path d="M244 661.2L245.2 673.6H254.8L256 661.2"/>
<path d="M242.6 659.8H257.4M247 659.4V657H253V659.4" />
<path d="M247.6 662.6V671.6M250 662.6V671.6M252.4 662.6V671.6" stroke-width="1.2"/>
</g>
<!-- ===== rulers ===== -->
<path d="M514.1 158V161M531.5 158V161M540.3 158V161M549.0 158V161M557.7 158V161M575.2 158V161M583.9 158V161M592.7 158V161M601.4 158V161M618.9 158V161M627.6 158V161M636.4 158V161M645.1 158V161M662.6 158V161M671.3 158V161M680.0 158V161M688.8 158V161M706.2 158V161M715.0 158V161M723.7 158V161M732.4 158V161M749.9 158V161M758.6 158V161M767.4 158V161M776.1 158V161M793.6 158V161M802.3 158V161M811.1 158V161M819.8 158V161M837.3 158V161M846.0 158V161M854.7 158V161M863.5 158V161M880.9 158V161M889.7 158V161M898.4 158V161M907.1 158V161M924.6 158V161M933.3 158V161M942.1 158V161M950.8 158V161M968.3 158V161M977.0 158V161M985.8 158V161M994.5 158V161M1012.0 158V161M1020.7 158V161M1029.4 158V161M1038.2 158V161M1055.6 158V161M1064.4 158V161M1073.1 158V161M1081.8 158V161M1099.3 158V161M1108.0 158V161M1116.8 158V161M1125.5 158V161M1143.0 158V161M1151.7 158V161M1160.5 158V161M1169.2 158V161M1186.7 158V161M1195.4 158V161M1204.1 158V161M1212.9 158V161M1230.3 158V161M1239.1 158V161M1247.8 158V161M1256.5 158V161M1274.0 158V161M1282.7 158V161M1291.5 158V161M1300.2 158V161M1317.7 158V161M1326.4 158V161M1335.2 158V161M1343.9 158V161M1361.4 158V161M1370.1 158V161M1378.8 158V161M1387.6 158V161M1405.0 158V161M1413.8 158V161M1422.5 158V161M1431.2 158V161M1448.7 158V161M1457.4 158V161M1466.2 158V161M1474.9 158V161M1492.4 158V161M1501.1 158V161M1509.9 158V161M1518.6 158V161M1536.1 158V161M1544.8 158V161M1553.5 158V161M1562.3 158V161M1579.7 158V161M1588.5 158V161M1597.2 158V161M1605.9 158V161M1623.4 158V161M1632.1 158V161M1640.9 158V161M1649.6 158V161M1667.1 158V161M1675.8 158V161M1684.6 158V161M1693.3 158V161M1710.8 158V161M1719.5 158V161M1728.2 158V161M566.5 155.5V161M653.8 155.5V161M741.2 155.5V161M828.5 155.5V161M915.9 155.5V161M1003.2 155.5V161M1090.6 155.5V161M1177.9 155.5V161M1265.3 155.5V161M1352.6 155.5V161M1440.0 155.5V161M1527.3 155.5V161M1614.7 155.5V161M1702.0 155.5V161" stroke="#c4c4c4" stroke-width="1" fill="none"/>
<path d="M522.8 141V161M610.1 141V161M697.5 141V161M784.9 141V161M872.2 141V161M959.5 141V161M1046.9 141V161M1134.2 141V161M1221.6 141V161M1308.9 141V161M1396.3 141V161M1483.7 141V161M1571.0 141V161M1658.3 141V161" stroke="#9c9c9c" stroke-width="1.1" fill="none"/>
<g font-family="Liberation Sans, sans-serif" font-size="11" fill="#bcbcbc">
<text x="525.2" y="152.6">400</text>
<text x="612.5" y="152.6">200</text>
<text x="699.9" y="152.6">0</text>
<text x="787.2" y="152.6">200</text>
<text x="874.6" y="152.6">400</text>
<text x="961.9" y="152.6">600</text>
<text x="1049.3" y="152.6">800</text>
<text x="1136.7" y="152.6">1000</text>
<text x="1224.0" y="152.6">1200</text>
<text x="1311.3" y="152.6">1400</text>
<text x="1398.7" y="152.6">1600</text>
<text x="1486.1" y="152.6">1800</text>
<text x="1573.4" y="152.6">2000</text>
<text x="1660.8" y="152.6">2200</text>
</g>
<path d="M500.5 176.4H503M500.5 185.2H503M500.5 193.9H503M500.5 202.6H503M500.5 220.1H503M500.5 228.8H503M500.5 237.6H503M500.5 246.3H503M500.5 263.8H503M500.5 272.5H503M500.5 281.3H503M500.5 290.0H503M500.5 307.5H503M500.5 316.2H503M500.5 324.9H503M500.5 333.7H503M500.5 351.1H503M500.5 359.9H503M500.5 368.6H503M500.5 377.3H503M500.5 394.8H503M500.5 403.5H503M500.5 412.3H503M500.5 421.0H503M500.5 438.5H503M500.5 447.2H503M500.5 456.0H503M500.5 464.7H503M500.5 482.2H503M500.5 490.9H503M500.5 499.6H503M500.5 508.4H503M500.5 525.8H503M500.5 534.6H503M500.5 543.3H503M500.5 552.0H503M500.5 569.5H503M500.5 578.2H503M500.5 587.0H503M500.5 595.7H503M500.5 613.2H503M500.5 621.9H503M500.5 630.7H503M500.5 639.4H503M497 211.4H503M497 298.7H503M497 386.1H503M497 473.4H503M497 560.8H503" stroke="#c4c4c4" stroke-width="1" fill="none"/>
<path d="M483 167.7H503M483 255.0H503M483 342.4H503M483 429.7H503M483 517.1H503M483 604.5H503" stroke="#a8a8a8" stroke-width="1.1" fill="none"/>
<clipPath id="vr"><rect x="483" y="163" width="20" height="482"/></clipPath>
<g font-family="Liberation Sans, sans-serif" font-size="11" fill="#bcbcbc" clip-path="url(#vr)">
<text x="484.4" y="180.9">0</text>
<text x="484.4" y="268.2">2</text>
<text x="484.4" y="279.2">0</text>
<text x="484.4" y="290.2">0</text>
<text x="484.4" y="355.6">4</text>
<text x="484.4" y="366.6">0</text>
<text x="484.4" y="377.6">0</text>
<text x="484.4" y="442.9">6</text>
<text x="484.4" y="453.9">0</text>
<text x="484.4" y="464.9">0</text>
<text x="484.4" y="530.3">8</text>
<text x="484.4" y="541.3">0</text>
<text x="484.4" y="552.3">0</text>
<text x="484.4" y="617.7">1</text>
<text x="484.4" y="628.7">0</text>
<text x="484.4" y="639.7">0</text>
<text x="484.4" y="650.7">0</text>
</g>
<path d="M483 162.2H1729.5" stroke="#fff" stroke-width="2.3"/>
<path d="M503.7 141V163.5" stroke="#fff" stroke-width="2.6"/>
<path d="M503.3 163.5V645" stroke="#fff" stroke-width="1.6"/>
<path d="M494.7 141V161M483 153H502.4" stroke="#8c8c8c" stroke-width="1" fill="none"/>
<path d="M730 141V161.2" stroke="#2d7fe0" stroke-width="1.6"/>
<path d="M483 617.5H503" stroke="#2d7fe0" stroke-width="1.4"/>
<!-- ===== comp header icons ===== -->
<path d="M496.6 82.2L504 89.6M504 82.2L496.6 89.6" stroke="#a8a8a8" stroke-width="1.2" fill="none"/>
<rect x="517.5" y="77" width="14.5" height="14" fill="#b8a47e"/>
<g fill="none" stroke="#c0c0c0" stroke-width="1.6">
<path d="M548.6 82V79.4A3 3 0 0 1 554.6 79.2"/>
</g>
<rect x="546.4" y="81.8" width="12.4" height="8.2" rx="0.8" fill="#c0c0c0"/>
<rect x="551.6" y="84" width="2.2" height="4" fill="#262626"/>
<path d="M727.6 81.2h11.4M727.6 85.8h11.4M727.6 90.4h11.4" stroke="#c4c4c4" stroke-width="1.5" fill="none"/>
<!-- ===== shape path in viewer ===== -->
<rect x="697" y="424.3" width="839" height="5.3" fill="#dc3232"/>
<path d="M552.5 427H1676.7" stroke="#1a1a1a" stroke-width="3.6" fill="none"/>
<path d="M697 427H1536" stroke="#dc3232" stroke-width="3.6" fill="none"/>
<path d="M552.5 427H1676.7" stroke="#6f8bf0" stroke-width="1.9" fill="none"/>
<g fill="none" stroke="#6f8bf0">
<rect x="1109.4" y="396.6" width="11.4" height="11.8" stroke-width="1.2"/>
<path d="M1114.7 400.5V441" stroke-width="1.6"/>
<circle cx="1114.7" cy="427.4" r="6.4" stroke-width="1.4" stroke="#9fb2f4"/>
<circle cx="1114.7" cy="427.4" r="3.2" fill="#6f8bf0" stroke="none"/>
<path d="M1104 427.2H1125.4" stroke-width="1.8" stroke="#9fb2f4"/>
</g>
<!-- ===== comp footer icons ===== -->
<g fill="#c0c0c0">
<!-- always preview -->
<path d="M490 654.6H503.2V665H490Z"/>
<path d="M494.6 657L499.6 659.8L494.6 662.6Z" fill="#272727"/>
<path d="M504.4 657.6H505.8V667.6H493.4V666.2H504.4ZM507 660.2H508.4V670.2H496V668.8H507Z"/>
<!-- monitor -->
<path d="M520.6 653.8H537.4V665.4H520.6ZM522.2 655.4V663.8H535.8V655.4Z" fill-rule="evenodd"/>
<path d="M527.4 665.4H530.6V667.4H533.6V668.8H524.4V667.4H527.4Z"/>
<!-- vr goggles -->
<path d="M551.6 653.8H568.4Q571.2 653.8 571.2 656.6V662.6Q571.2 665.6 568.2 665.6H564.4L562 662.4H558L555.6 665.6H551.8Q548.8 665.6 548.8 662.6V656.6Q548.8 653.8 551.6 653.8Z"/>
<circle cx="554.8" cy="659.6" r="2.7" fill="#272727"/><circle cx="565.2" cy="659.6" r="2.7" fill="#272727"/>
<path d="M561.6 669H568.6L565.1 672.6Z"/>
</g>
<path d="M655.6 660.6L660.4 665L665.2 660.6" fill="none" stroke="#d0d0d0" stroke-width="1.6"/>
<!-- region of interest -->
<g fill="none" stroke="#c4c4c4" stroke-width="1.5">
<rect x="680.4" y="654.4" width="15.2" height="11.6"/>
<path d="M684.4 652V654.4M691.6 652V654.4M684.4 666V668.4M691.6 666V668.4M678 657.6H680.4M678 662.8H680.4M695.6 657.6H698M695.6 662.8H698"/>
<path d="M688 657.4V663M685.2 660.2H690.8" stroke-width="1.2" stroke-dasharray="1.4 1.2"/>
</g>
<path d="M690.4 669H697.4L693.9 672.6Z" fill="#c4c4c4"/>
<!-- mask toggle -->
<g fill="none" stroke="#2d8ceb" stroke-width="1.5">
<path d="M714 656.4L727.6 655L729.6 669.2H711.2Z"/>
</g>
<g fill="#2d8ceb"><circle cx="714" cy="656.4" r="1.7"/><circle cx="727.6" cy="655" r="1.7"/><circle cx="729.6" cy="669.2" r="1.7"/><circle cx="711.2" cy="669.2" r="1.7"/></g>
<!-- camera snapshot -->
<path d="M840 658.2H844.2L845.8 655.6H850.4L852 658.2H856Q858 658.2 858 660.2V668.4Q858 670.4 856 670.4H840Q838 670.4 838 668.4V660.2Q838 658.2 840 658.2Z" fill="#c0c0c0"/>
<circle cx="848" cy="664" r="3.9" fill="#272727"/><circle cx="848" cy="664" r="2.2" fill="#c0c0c0"/>
<!-- show snapshot (disabled) -->
<g fill="#3e3e3e">
<path d="M868 664.4Q877.6 653.6 887.4 664.4Q877.6 675.2 868 664.4Z"/>
<path d="M877 653.4H886Q887.4 653.4 887.4 654.8V659.4H877Z"/>
</g>
<circle cx="877.6" cy="664.4" r="3.2" fill="#272727"/>
<!-- channels -->
<circle cx="909.4" cy="656.8" r="4.6" fill="#f02428"/>
<circle cx="905.4" cy="663" r="4.6" fill="#26c032"/>
<circle cx="913.2" cy="663" r="4.6" fill="#3d6cf0"/>
<path d="M911.4 669H918.4L914.9 672.6Z" fill="#c4c4c4"/>
<path d="M1031.6 660.6L1036.4 665L1041.2 660.6M1245.2 660.6L1250 665L1254.8 660.6M1348 660.6L1352.8 665L1357.6 660.6" fill="none" stroke="#d0d0d0" stroke-width="1.6"/>
<!-- fast previews region -->
<g fill="none" stroke="#c4c4c4" stroke-width="1.5">
<rect x="1055.8" y="654.4" width="18.6" height="15"/>
</g>
<rect x="1059.6" y="658.4" width="11" height="7.4" fill="#b4b4b4"/>
<!-- transparency grid -->
<rect x="1085.6" y="655" width="20.4" height="15" fill="#b4b4b4"/>
<path d="M1087 656.4H1091.6V660.8H1087ZM1096.2 656.4H1100.6V660.8H1096.2ZM1091.6 660.8H1096.2V665.2H1091.6ZM1100.6 660.8H1104.8V665.2H1100.6ZM1087 665.2H1091.6V668.8H1087ZM1096.2 665.2H1100.6V668.8H1096.2Z" fill="#3a3a3a"/>
<path d="M1091.6 656.4H1096.2V660.8H1091.6ZM1100.6 656.4H1104.8V660.8H1100.6ZM1087 660.8H1091.6V665.2H1087ZM1096.2 660.8H1100.6V665.2H1096.2ZM1091.6 665.2H1096.2V668.8H1091.6ZM1100.6 665.2H1104.8V668.8H1100.6Z" fill="#7a7a7a"/>
<!-- pixel aspect -->
<g fill="none" stroke="#c4c4c4" stroke-width="1.5">
<path d="M1371.8 657H1392M1375.4 653.8L1371.8 657L1375.4 660.2M1388.4 653.8L1392 657L1388.4 660.2"/>
<rect x="1376.6" y="662.4" width="10.8" height="7.4"/>
</g>
<!-- fast preview -->
<g fill="none" stroke="#c4c4c4" stroke-width="1.5">
<path d="M1415.6 669.4H1403.2V654.6H1421.8V664"/>
</g>
<path d="M1413.4 656.4L1408 663H1411.4L1409.8 668.2L1416 660.8H1412.4Z" fill="#c4c4c4"/>
<path d="M1414.6 666H1421.6L1418.1 669.8Z" fill="#c4c4c4"/>
<!-- timeline button -->
<g fill="#c0c0c0">
<rect x="1441" y="653.8" width="7.4" height="5"/>
<path d="M1435.4 657.6H1437V666H1439.6V661H1441.2V666H1444V658.8H1445.6V666H1448.4V661H1450V666H1452.4V657.6H1454V667.6H1435.4Z"/>
<!-- flowchart -->
<rect x="1469.6" y="653.8" width="7.6" height="5.4"/>
<rect x="1464" y="664.6" width="7.2" height="5.6"/>
<rect x="1475.6" y="664.6" width="7.2" height="5.6"/>
<path d="M1472.8 659.2H1474V661.4H1479.8V664.6H1478.6V662.6H1468.2V664.6H1467V661.4H1472.8Z"/>
</g>
<!-- exposure aperture -->
<circle cx="1507.4" cy="661.8" r="8.7" fill="#c0c0c0"/>
<g stroke="#272727" stroke-width="1.3" fill="none">
<path d="M1503.6 654.2L1510.6 659.4M1512.6 655L1511.4 663.6M1516 661L1508.6 665.6M1511.2 669.4L1504.2 664.2M1502.2 668.6L1503.4 660M1498.8 662.6L1506.2 658"/>
</g>
<circle cx="1507.4" cy="661.8" r="2.6" fill="#272727"/>
<!-- ===== timeline icons ===== -->
<path d="M47.4 699.6L54.8 707M54.8 699.6L47.4 707" stroke="#a8a8a8" stroke-width="1.2" fill="none"/>
<rect x="64" y="695.5" width="14.8" height="14.5" fill="#b8a47e"/>
<path d="M194.2 699.6h11.4M194.2 704.2h11.4M194.2 708.8h11.4" stroke="#c4c4c4" stroke-width="1.5" fill="none"/>
<g fill="none" stroke="#c8c8c8" stroke-width="1.5"><circle cx="187.6" cy="744.4" r="4.7"/><path d="M184.2 748L178.2 754.4" stroke-linecap="round"/></g>
<path d="M193.8 749H201.2L197.5 752.6Z" fill="#c8c8c8"/>
<g fill="#c0c0c0"><rect x="514.2" y="740.6" width="7.6" height="3.4" rx="1.2"/><rect x="528.8" y="739.8" width="6.6" height="4.4" rx="1"/><rect x="528.8" y="747.2" width="6.6" height="4.4" rx="1"/><path d="M531.4 753.4H538L534.7 756.8Z"/></g>
<path d="M521.8 742.3H528.8M525.6 742.3V749.4H528.8" fill="none" stroke="#c0c0c0" stroke-width="1.3"/>
<g fill="none" stroke="#c0c0c0" stroke-width="1.5"><path d="M566.4 735V747M560.6 741H572.2M562.2 736.8L570.6 745.2M570.6 736.8L562.2 745.2" stroke-width="1.4"/></g>
<path d="M576 744.6L584.4 748.2V755.6L576 759.2L567.6 755.6V748.2Z" fill="#262626" stroke="#c0c0c0" stroke-width="1.5"/>
<path d="M567.8 748.4L576 751.8L584.2 748.4M576 751.8V759" fill="none" stroke="#c0c0c0" stroke-width="1.3"/>
<path d="M608.8 747.6H632V755.8H608.8Z" fill="#858585"/>
<path d="M610.2 747.6L613 745.2A7.5 7.4 0 0 1 627.8 745.2L630.6 747.6Z" fill="#c4c4c4"/>
<path d="M618.2 747H622.6V752.4A2.2 2.2 0 0 1 618.2 752.4Z" fill="#c4c4c4"/>
<circle cx="617.9" cy="743.6" r="1.5" fill="#262626"/><circle cx="622.9" cy="743.6" r="1.5" fill="#262626"/>
<g fill="#c0c0c0"><path d="M651 738.8H666.6V753H651ZM654.4 740.4V746H663.2V740.4ZM654.4 747.4V751.4H663.2V747.4Z" fill-rule="evenodd"/><path d="M645.6 743.6H649.6V754.4H660.8V757H645.6Z"/></g>
<path d="M652.6 740.2v1.6M652.6 743.2v1.6M652.6 746.2v1.6M652.6 749.2v1.6M665 740.2v1.6M665 743.2v1.6M665 746.2v1.6M665 749.2v1.6M647.4 745.4v1.6M647.4 748.4v1.6M647.4 751.4v1.6" stroke="#262626" stroke-width="1.2" fill="none"/>
<g fill="none" stroke="#c0c0c0" stroke-width="1.4"><circle cx="689.4" cy="750.4" r="6.6"/><circle cx="692.4" cy="748" r="6.6" fill="#262626"/><circle cx="695.8" cy="745.4" r="6.6" fill="#777"/></g>
<g fill="none" stroke="#c0c0c0" stroke-width="1.5"><rect x="731" y="738" width="20" height="18.6"/><path d="M733.4 742H738C743 742 740.6 752.8 746 752.8H748.8" stroke-width="1.4"/><path d="M735 735.6V738M739 735.6V738M743 735.6V738M747 735.6V738M729 742.4H731M729 746.4H731M729 750.4H731M729 754.4H731" stroke-width="1.2"/></g>
<path d="M36.8 787.2Q44.6 776.6 52.4 787.2Q44.6 797.8 36.8 787.2Z" fill="#c8c8c8"/><circle cx="44.6" cy="787.2" r="3" fill="#2e2e2e"/><circle cx="44.8" cy="787.0" r="1.2" fill="#6a6a6a"/>
<g fill="#c4c4c4"><path d="M57.2 783.8H60.4L64.2 779.8V794.6L60.4 790.6H57.2Z"/></g>
<g fill="none" stroke="#c4c4c4" stroke-width="1.5"><path d="M66.4 783.2A5 5 0 0 1 66.4 791.2M67.2 779.6A8.6 8.6 0 0 1 67.2 794.8"/></g>
<circle cx="86" cy="787.2" r="5.3" fill="#c4c4c4"/>
<g fill="none" stroke="#c4c4c4" stroke-width="1.9"><path d="M103 786V783.4A4 4 0 0 1 111 783.4V786"/></g>
<rect x="99.8" y="785.6" width="14.4" height="9.2" rx="0.8" fill="#c4c4c4"/><path d="M105.8 788.2H108.2V792.6H105.8Z" fill="#2e2e2e"/>
<path d="M143 778.6H150.8L160 787.6L152.4 795.2L143 786Z" fill="#c2c2c2"/><circle cx="146.8" cy="782.4" r="1.5" fill="#2e2e2e"/>
<g transform="translate(411.8 787.0) scale(1.00)"><path d="M-5.6 1.2V-1.6A5.6 5.6 0 0 1 5.6 -1.6V1.2Z" fill="#c4c4c4"/><circle cx="-2.3" cy="-2" r="1.25" fill="#2e2e2e"/><circle cx="2.3" cy="-2" r="1.25" fill="#2e2e2e"/><path d="M-1.3 1.2H1.3V5.4A1.3 1.3 0 0 1 -1.3 5.4Z" fill="#c4c4c4"/><path d="M-8.4 3.4H-2.6M2.6 3.4H8.4" stroke="#c4c4c4" stroke-width="1.4" fill="none"/></g>
<circle cx="433.4" cy="787.4" r="2.9" fill="none" stroke="#c4c4c4" stroke-width="1.5"/><path d="M437.6 787.4L440.4 787.4M436.4 790.4L438.3 792.3M433.4 791.6L433.4 794.4M430.4 790.4L428.5 792.3M429.2 787.4L426.4 787.4M430.4 784.4L428.5 782.5M433.4 783.2L433.4 780.4M436.4 784.4L438.3 782.5" stroke="#c4c4c4" stroke-width="1.5" fill="none"/>
<path d="M446.4 780.4L460.4 794.4" stroke="#c4c4c4" stroke-width="2.2" stroke-dasharray="2.4 1.8" fill="none"/>
<text x="466.4" y="793" font-family="Liberation Serif, serif" font-style="italic" font-size="17.5" fill="#c4c4c4">fx</text>
<g fill="#c4c4c4"><path d="M489.6 780H504.2V794.4H489.6ZM492.6 781.6V786.4H501.2V781.6ZM492.6 788V792.8H501.2V788Z" fill-rule="evenodd"/><path d="M487 782H488.4V794.4H489.6V795.8H487Z"/></g>
<path d="M491.1 781.4v1.5M491.1 784.4v1.5M491.1 787.4v1.5M491.1 790.4v1.5M502.7 781.4v1.5M502.7 784.4v1.5M502.7 787.4v1.5M502.7 790.4v1.5" stroke="#2e2e2e" stroke-width="1.1" fill="none"/>
<g fill="none" stroke="#c4c4c4" stroke-width="1.3"><circle cx="513.4" cy="790.6" r="5.2"/><circle cx="516" cy="788.4" r="5.2" fill="#2e2e2e"/><circle cx="519.4" cy="785.4" r="5.4" fill="#787878"/></g>
<circle cx="538" cy="787.4" r="7" fill="#c4c4c4"/><path d="M533.2 792.4A7 7 0 0 1 543 782.6Z" fill="#2e2e2e" transform="rotate(0 538 787.4)"/><circle cx="538" cy="787.4" r="7" fill="none" stroke="#c4c4c4" stroke-width="1.4"/>
<path d="M559 779.6L567 783.2V791.6L559 795.4L551 791.6V783.2Z" fill="none" stroke="#c4c4c4" stroke-width="1.5"/><path d="M551.2 783.4L559 787L566.8 783.4M559 787V795" fill="none" stroke="#c4c4c4" stroke-width="1.3"/>
<path d="M36.8 811.2Q44.6 800.6 52.4 811.2Q44.6 821.8 36.8 811.2Z" fill="#d0d0d0"/><circle cx="44.6" cy="811.2" r="3" fill="#383838"/><circle cx="44.8" cy="811.0" r="1.2" fill="#6a6a6a"/>
<path d="M133.4 808.8L138.2 813.4L143 808.8" fill="none" stroke="#d0d0d0" stroke-width="1.6"/>
<path d="M227.2 804.2L229.3 810.0L235.4 810.1L230.5 813.9L232.3 819.8L227.2 816.3L222.1 819.8L223.9 813.9L219.0 810.1L225.1 810.0Z" fill="#c8c8c8"/>
<g transform="translate(412.0 811.4) scale(1.00)"><path d="M-5.6 1.2V-1.6A5.6 5.6 0 0 1 5.6 -1.6V1.2Z" fill="#d0d0d0"/><circle cx="-2.3" cy="-2" r="1.25" fill="#363636"/><circle cx="2.3" cy="-2" r="1.25" fill="#363636"/><path d="M-1.3 1.2H1.3V5.4A1.3 1.3 0 0 1 -1.3 5.4Z" fill="#d0d0d0"/><path d="M-8.4 3.4H-2.6M2.6 3.4H8.4" stroke="#d0d0d0" stroke-width="1.4" fill="none"/></g>
<circle cx="433.4" cy="811.6" r="2.9" fill="none" stroke="#6e6e6e" stroke-width="1.5"/><path d="M437.6 811.6L440.4 811.6M436.4 814.6L438.3 816.5M433.4 815.8L433.4 818.6M430.4 814.6L428.5 816.5M429.2 811.6L426.4 811.6M430.4 808.6L428.5 806.7M433.4 807.4L433.4 804.6M436.4 808.6L438.3 806.7" stroke="#6e6e6e" stroke-width="1.5" fill="none"/>
<path d="M447.6 819L461 805" stroke="#d0d0d0" stroke-width="1.6" fill="none"/>
<path transform="translate(603.7 811.0)" d="M8.1 -6.1A9.5 9.5 0 0 1 0.3 7.1A7.6 7.3 0 0 1 -7.9 0.2A7.6 7 0 0 1 0 -6.85A4.6 4.8 0 0 1 3.1 -0.6A2.9 2.9 0 0 1 -0.3 2.4A2.6 2.6 0 0 1 -2.8 0.2A1.8 1.8 0 0 1 -1.4 -1.4" fill="none" stroke="#c8c8c8" stroke-width="1.4" stroke-linecap="round"/>
<path d="M729.4 809L734.2 813.4L739 809" fill="none" stroke="#d8d8d8" stroke-width="1.6"/>
<path d="M157.2 833.8L162 838.4L166.8 833.8" fill="none" stroke="#c4c4c4" stroke-width="1.6"/>
<circle cx="608.1" cy="835" r="8" fill="#d0d0d0"/><path d="M605.8 830.6L611.6 835L605.8 839.4Z" fill="#262626"/>
<path d="M36.8 859.2Q44.6 848.6 52.4 859.2Q44.6 869.8 36.8 859.2Z" fill="#d0d0d0"/><circle cx="44.6" cy="859.2" r="3" fill="#1d1d1d"/><circle cx="44.8" cy="859.0" r="1.2" fill="#6a6a6a"/>
<path d="M180.4 857.2L185.2 861.8L190 857.2" fill="none" stroke="#c4c4c4" stroke-width="1.6"/>
<path d="M599.2 857.4L604 861.8L608.8 857.4" fill="none" stroke="#d8d8d8" stroke-width="1.6"/>
<path d="M36.8 883.0Q44.6 872.4 52.4 883.0Q44.6 893.6 36.8 883.0Z" fill="#d0d0d0"/><circle cx="44.6" cy="883.0" r="3" fill="#1d1d1d"/><circle cx="44.8" cy="882.8" r="1.2" fill="#6a6a6a"/>
<path d="M204.4 881L209.2 885.6L214 881" fill="none" stroke="#c4c4c4" stroke-width="1.6"/>
<g fill="none" stroke="#2d8ceb" stroke-width="1.3"><circle cx="408.4" cy="878.6" r="1.7"/><circle cx="423" cy="878.6" r="1.7"/><path d="M410.2 878.6H421.2"/><path d="M424.6 887.4H408.2M411.6 884.4L408 887.4L411.6 890.4" stroke-width="1.5"/></g>
<g fill="none" stroke="#c4c4c4" stroke-width="1.3"><circle cx="434" cy="878.6" r="1.7"/><circle cx="448.6" cy="878.6" r="1.7"/><path d="M435.8 878.6H446.8"/><path d="M432.6 887.4H449M445.6 884.4L449.2 887.4L445.6 890.4" stroke-width="1.5"/></g>
<path d="M47.8 901V912.4L38.8 906.7Z" fill="#c4c4c4"/>
<path d="M65 900.4L71.4 906.8L65 913.2L58.6 906.8Z" fill="#2d8ceb"/>
<path d="M82.2 901V912.4L90.8 906.7Z" fill="#555"/>
<g fill="none" stroke="#2d8ceb" stroke-width="1.5"><circle cx="254.2" cy="907.6" r="7.1"/><path d="M251.2 897.8H257.2" stroke-width="1.6"/><path d="M259.4 900.4L261.2 898.6" stroke-width="1.4"/></g>
<path d="M254.2 907.6L258 902.6" stroke="#2d8ceb" stroke-width="1.5" fill="none"/>
<g fill="none" stroke="#c4c4c4" stroke-width="1.4"><path d="M271.2 898.4V914.4H287.4"/><path d="M273.4 909L277.6 903.4L281.2 908.6L286 904.6" stroke-width="1.2"/></g>
<path transform="translate(657.3 906.6)" d="M8.1 -6.1A9.5 9.5 0 0 1 0.3 7.1A7.6 7.3 0 0 1 -7.9 0.2A7.6 7 0 0 1 0 -6.85A4.6 4.8 0 0 1 3.1 -0.6A2.9 2.9 0 0 1 -0.3 2.4A2.6 2.6 0 0 1 -2.8 0.2A1.8 1.8 0 0 1 -1.4 -1.4" fill="none" stroke="#c8c8c8" stroke-width="1.4" stroke-linecap="round"/>
<path d="M36.8 930.6Q44.6 920.0 52.4 930.6Q44.6 941.2 36.8 930.6Z" fill="#d0d0d0"/><circle cx="44.6" cy="930.6" r="3" fill="#1d1d1d"/><circle cx="44.8" cy="930.4" r="1.2" fill="#6a6a6a"/>
<path d="M204.4 928.6L209.2 933.2L214 928.6" fill="none" stroke="#c4c4c4" stroke-width="1.6"/>
<path d="M599.2 928.8L604 933.2L608.8 928.8" fill="none" stroke="#d8d8d8" stroke-width="1.6"/>
<path d="M599.2 952.6L604 957L608.8 952.6" fill="none" stroke="#d8d8d8" stroke-width="1.6"/>
<path transform="translate(657.3 954.2)" d="M8.1 -6.1A9.5 9.5 0 0 1 0.3 7.1A7.6 7.3 0 0 1 -7.9 0.2A7.6 7 0 0 1 0 -6.85A4.6 4.8 0 0 1 3.1 -0.6A2.9 2.9 0 0 1 -0.3 2.4A2.6 2.6 0 0 1 -2.8 0.2A1.8 1.8 0 0 1 -1.4 -1.4" fill="none" stroke="#c8c8c8" stroke-width="1.4" stroke-linecap="round"/>
<g fill="none" stroke="#c4c4c4" stroke-width="1.5"><circle cx="254.2" cy="979.0" r="7.1"/><path d="M251.2 969.2H257.2" stroke-width="1.6"/><path d="M259.4 971.8L261.2 970.0" stroke-width="1.4"/></g>
<path transform="translate(657.3 978.0)" d="M8.1 -6.1A9.5 9.5 0 0 1 0.3 7.1A7.6 7.3 0 0 1 -7.9 0.2A7.6 7 0 0 1 0 -6.85A4.6 4.8 0 0 1 3.1 -0.6A2.9 2.9 0 0 1 -0.3 2.4A2.6 2.6 0 0 1 -2.8 0.2A1.8 1.8 0 0 1 -1.4 -1.4" fill="none" stroke="#c8c8c8" stroke-width="1.4" stroke-linecap="round"/>
<g fill="#c4c4c4"><path d="M444.6 977L446.2 975.4H458.6V981.4H446.2L444.6 979.8Z" fill="none" stroke="#c4c4c4" stroke-width="1.3"/><rect x="458.6" y="974.2" width="3.2" height="8.4"/><rect x="461.8" y="975.4" width="6.6" height="6" rx="1.6"/></g>
<g fill="none" stroke="#c4c4c4" stroke-width="1.5"><circle cx="254.2" cy="1002.8" r="7.1"/><path d="M251.2 993.0H257.2" stroke-width="1.6"/><path d="M259.4 995.6L261.2 993.8" stroke-width="1.4"/></g>
<path transform="translate(657.3 1001.8)" d="M8.1 -6.1A9.5 9.5 0 0 1 0.3 7.1A7.6 7.3 0 0 1 -7.9 0.2A7.6 7 0 0 1 0 -6.85A4.6 4.8 0 0 1 3.1 -0.6A2.9 2.9 0 0 1 -0.3 2.4A2.6 2.6 0 0 1 -2.8 0.2A1.8 1.8 0 0 1 -1.4 -1.4" fill="none" stroke="#c8c8c8" stroke-width="1.4" stroke-linecap="round"/>
<g fill="none" stroke="#c4c4c4" stroke-width="1.5"><circle cx="254.2" cy="1026.6" r="7.1"/><path d="M251.2 1016.8H257.2" stroke-width="1.6"/><path d="M259.4 1019.4L261.2 1017.6" stroke-width="1.4"/></g>
<path transform="translate(657.3 1025.6)" d="M8.1 -6.1A9.5 9.5 0 0 1 0.3 7.1A7.6 7.3 0 0 1 -7.9 0.2A7.6 7 0 0 1 0 -6.85A4.6 4.8 0 0 1 3.1 -0.6A2.9 2.9 0 0 1 -0.3 2.4A2.6 2.6 0 0 1 -2.8 0.2A1.8 1.8 0 0 1 -1.4 -1.4" fill="none" stroke="#c8c8c8" stroke-width="1.4" stroke-linecap="round"/>
<path d="M649 1043A9 9 0 0 1 660 1040.6" fill="none" stroke="#8a8a8a" stroke-width="1.2"/>
<path d="M786.2 760.6V771M1152.2 760.6V771M1518.5 760.6V771M908.2 765V771M1274.2 765V771M1396.4 765V771M1640.6 765V771" stroke="#b0b0b0" stroke-width="1.2" fill="none"/>
<path d="M786 902L792.4 908.4L786 914.8L779.6 908.4Z" fill="#9a9a9a"/><path d="M786 902L792.4 908.4L786 914.8Z" fill="#c4c4c4"/>
<path d="M1029.6 828.4V843.8M1029.6 852.2V867.6M1029.6 876.0V891.4M1029.6 923.6V939.0M1029.6 971.2V986.6M1029.6 995.0V1010.4M1029.6 1018.8V1034.2" stroke="#b4aca4" stroke-width="3.8" fill="none"/>
<path d="M1024.7 828.8H1034.5M1024.7 843.2H1034.5M1024.7 852.6H1034.5M1024.7 867.0H1034.5M1024.7 876.4H1034.5M1024.7 890.8H1034.5M1024.7 924.0H1034.5M1024.7 938.4H1034.5M1024.7 971.6H1034.5M1024.7 986.0H1034.5M1024.7 995.4H1034.5M1024.7 1009.8H1034.5M1024.7 1019.2H1034.5M1024.7 1033.6H1034.5" stroke="#d0ccc4" stroke-width="1.5" fill="none"/>
<path d="M1023.4 901.6H1036L1031.4 908.0L1036 914.4H1023.4L1028 908.0Z" fill="#c4c0b8"/>
<path d="M1029.55 731V743.8M1029.55 752V1043" stroke="#2d8ceb" stroke-width="1.7" fill="none"/>
<path d="M1021.8 751.6H1037.3V759.4L1029.55 770.4L1021.8 759.4Z" fill="#2d8ceb"/>
<path d="M1027.5 760.6H1031.6" stroke="#1a2c44" stroke-width="1.5" fill="none"/><path d="M1029.55 761V769.4" stroke="#1a2c44" stroke-width="0.9" fill="none"/>
</svg>
</div>
</body>
</html>
